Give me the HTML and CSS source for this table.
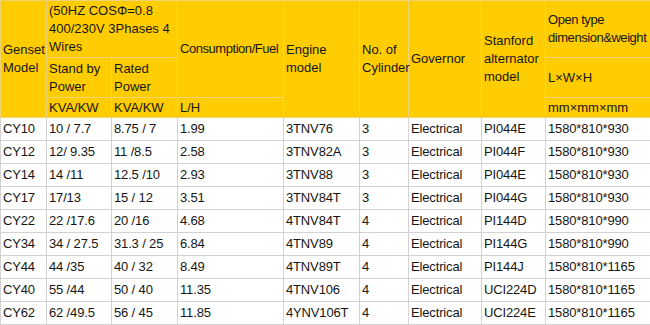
FILE: index.html
```html
<!DOCTYPE html>
<html>
<head>
<meta charset="utf-8">
<link rel="stylesheet" href="styles.css">
</head>
<body>
<table class="spec">
  <colgroup>
    <col class="c1"><col class="c2"><col class="c3"><col class="c4"><col class="c5"><col class="c6"><col class="c7"><col class="c8"><col class="c9">
  </colgroup>
  <thead>
    <tr class="h1">
      <th rowspan="3">Genset Model</th>
      <th colspan="2">(50HZ COSΦ=0.8 400/230V 3Phases 4 Wires</th>
      <th rowspan="2" class="nowrap tight">Consumption/Fuel</th>
      <th rowspan="3">Engine model</th>
      <th rowspan="3">No. of Cylinder</th>
      <th rowspan="3">Governor</th>
      <th rowspan="3">Stanford alternator model</th>
      <th class="nowrap tight">Open type<br>dimension&amp;weight</th>
    </tr>
    <tr class="h2">
      <th>Stand by Power</th>
      <th>Rated Power</th>
      <th>L×W×H</th>
    </tr>
    <tr class="h3">
      <th>KVA/KW</th>
      <th>KVA/KW</th>
      <th>L/H</th>
      <th>mm×mm×mm</th>
    </tr>
  </thead>
  <tbody>
    <tr><td>CY10</td><td>10 / 7.7</td><td>8.75 / 7</td><td>1.99</td><td>3TNV76</td><td>3</td><td>Electrical</td><td>PI044E</td><td>1580*810*930</td></tr>
    <tr><td>CY12</td><td>12/ 9.35</td><td>11 /8.5</td><td>2.58</td><td>3TNV82A</td><td>3</td><td>Electrical</td><td>PI044F</td><td>1580*810*930</td></tr>
    <tr><td>CY14</td><td>14 /11</td><td>12.5 /10</td><td>2.93</td><td>3TNV88</td><td>3</td><td>Electrical</td><td>PI044E</td><td>1580*810*930</td></tr>
    <tr><td>CY17</td><td>17/13</td><td>15 / 12</td><td>3.51</td><td>3TNV84T</td><td>3</td><td>Electrical</td><td>PI044G</td><td>1580*810*930</td></tr>
    <tr><td>CY22</td><td>22 /17.6</td><td>20 /16</td><td>4.68</td><td>4TNV84T</td><td>4</td><td>Electrical</td><td>PI144D</td><td>1580*810*990</td></tr>
    <tr><td>CY34</td><td>34 / 27.5</td><td>31.3 / 25</td><td>6.84</td><td>4TNV89</td><td>4</td><td>Electrical</td><td>PI144G</td><td>1580*810*990</td></tr>
    <tr><td>CY44</td><td>44 /35</td><td>40 / 32</td><td>8.49</td><td>4TNV89T</td><td>4</td><td>Electrical</td><td>PI144J</td><td>1580*810*1165</td></tr>
    <tr><td>CY40</td><td>55 /44</td><td>50 / 40</td><td>11.35</td><td>4TNV106</td><td>4</td><td>Electrical</td><td>UCI224D</td><td>1580*810*1165</td></tr>
    <tr><td>CY62</td><td>62 /49.5</td><td>56 / 45</td><td>11.85</td><td>4YNV106T</td><td>4</td><td>Electrical</td><td>UCI224E</td><td>1580*810*1165</td></tr>
  </tbody>
</table>
</body>
</html>
```

FILE: styles.css
```css
html, body {
  margin: 0;
  padding: 0;
  background: #ffffff;
}

.spec {
  border-collapse: collapse;
  table-layout: fixed;
  width: 650px;
  font-family: "Liberation Sans", Arial, sans-serif;
  font-size: 13px;
  color: #161616;
}

.c1 { width: 46px; }
.c2 { width: 65px; }
.c3 { width: 66px; }
.c4 { width: 106px; }
.c5 { width: 76px; }
.c6 { width: 49px; }
.c7 { width: 73px; }
.c8 { width: 64px; }
.c9 { width: 105px; }

.spec th {
  background: #ffcc00;
  border: 1px solid #efd475;
  font-weight: normal;
  text-align: left;
  vertical-align: middle;
  line-height: 18px;
  padding: 0 1px 0 2px;
  overflow: visible;
}

.spec .h1 { height: 57px; }
.spec .h2 { height: 40px; }
.spec .h3 { height: 20px; }

.spec .nowrap { white-space: nowrap; }
.spec .tight { letter-spacing: -0.45px; }

.spec td {
  border: 1px solid #d2d2d2;
  line-height: 22px;
  height: 22px;
  padding: 0 1px 0 2px;
  white-space: nowrap;
  vertical-align: middle;
  letter-spacing: -0.15px;
}
```
